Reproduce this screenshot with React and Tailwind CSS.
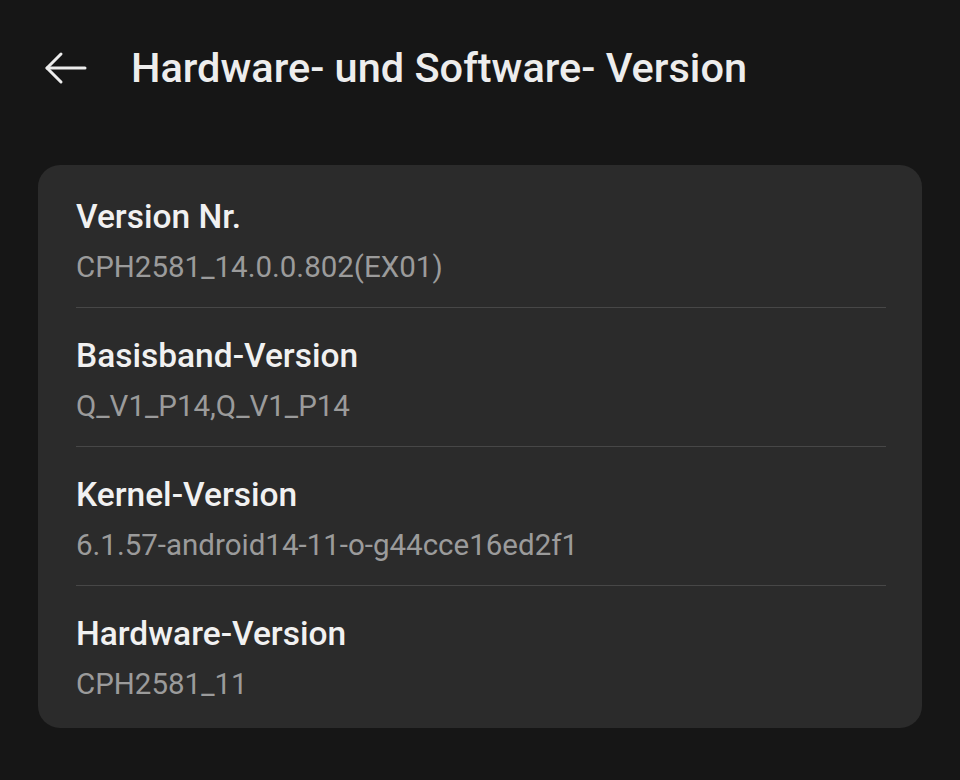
const items = [
  { label: 'Version Nr.', value: 'CPH2581_14.0.0.802(EX01)' },
  { label: 'Basisband-Version', value: 'Q_V1_P14,Q_V1_P14' },
  { label: 'Kernel-Version', value: '6.1.57-android14-11-o-g44cce16ed2f1' },
  { label: 'Hardware-Version', value: 'CPH2581_11' },
];

export default function App() {
  return (
    <div
      className="w-[960px] h-[780px] bg-[#161616] text-white overflow-hidden"
      style={{ fontFamily: 'Roboto, "Noto Sans", sans-serif' }}
    >
      {/* header */}
      <div className="flex items-center h-[138px] pl-[44px] pb-[2px]">
        <svg
          className="w-[43px] h-[34px] text-[#ececec]"
          viewBox="0 0 43 34"
          fill="none"
          stroke="currentColor"
          strokeWidth="3"
          strokeLinecap="round"
          strokeLinejoin="round"
        >
          <path d="M41 17H3" />
          <path d="M17 3L3 17l14 14" />
        </svg>
        <h1 className="ml-[44px] text-[41.5px] font-medium text-[#ededed]">
          Hardware- und Software- Version
        </h1>
      </div>

      {/* card */}
      <div className="mx-[38px] mt-[27px] bg-[#2b2b2b] rounded-[22px] pl-[38px] pr-[36px] py-[4px]">
        {items.map((item, i) => (
          <div
            key={item.label}
            className={`pt-[28px] pb-[22px] ${
              i < items.length - 1 ? 'border-b border-[#474747]' : ''
            }`}
          >
            <div className="text-[33.5px] leading-[40px] font-medium text-[#f1f1f1]">
              {item.label}
            </div>
            <div className="mt-[12px] text-[29.5px] leading-[36px] text-[#9b9b9b]">
              {item.value}
            </div>
          </div>
        ))}
      </div>
    </div>
  );
}
